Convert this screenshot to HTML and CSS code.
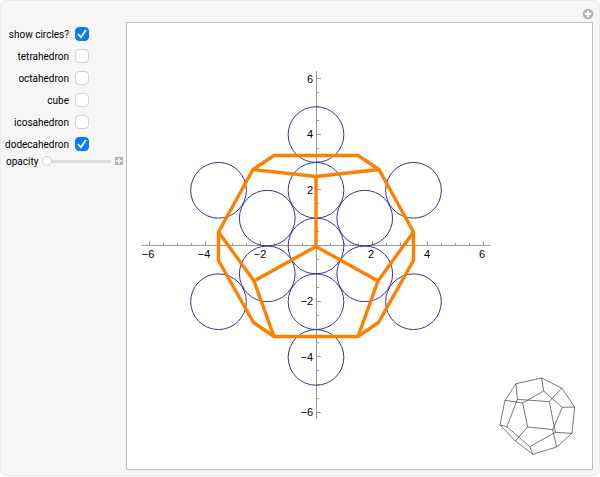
FILE: index.html
```html
<!DOCTYPE html>
<html lang="en">
<head>
    <meta charset="UTF-8">
    <meta name="viewport" content="width=device-width, initial-scale=1.0">
    <title>Polyhedra and circles</title>
    <link rel="stylesheet" href="styles.css">
</head>
<body>
    <main class="panel">
        <header class="panel-header">
            <button class="menu-button" type="button" aria-label="Options">
                <svg width="12" height="12" viewBox="0 0 12 12">
                    <circle cx="6" cy="6" r="5.3" fill="#b4b4b4"/>
                    <path d="M6 2.8v6.4M2.8 6h6.4" stroke="#fff" stroke-width="2.2"/>
                </svg>
            </button>
        </header>
        <div class="panel-body">
            <form class="controls">
                <div class="check-row">
                    <label for="circles">show circles?</label>
                    <input type="checkbox" id="circles" checked>
                </div>
                <div class="check-row">
                    <label for="tetrahedron">tetrahedron</label>
                    <input type="checkbox" id="tetrahedron">
                </div>
                <div class="check-row">
                    <label for="octahedron">octahedron</label>
                    <input type="checkbox" id="octahedron">
                </div>
                <div class="check-row">
                    <label for="cube">cube</label>
                    <input type="checkbox" id="cube">
                </div>
                <div class="check-row">
                    <label for="icosahedron">icosahedron</label>
                    <input type="checkbox" id="icosahedron">
                </div>
                <div class="check-row">
                    <label for="dodecahedron">dodecahedron</label>
                    <input type="checkbox" id="dodecahedron" checked>
                </div>
                <div class="slider-row">
                    <label for="opacity">opacity</label>
                    <input type="range" id="opacity" min="0" max="100" value="0">
                    <button class="expand-button" type="button" aria-label="Show slider controls">
                        <svg width="8" height="8" viewBox="0 0 8 8">
                            <rect width="8" height="8" fill="#b4b4b4"/>
                            <path d="M4 1v6M1 4h6" stroke="#fff" stroke-width="1.4"/>
                        </svg>
                    </button>
                </div>
            </form>
            <div class="output">
                <svg class="plot" viewBox="-189 -222 465 446">
                    <!-- axes, one unit is 27.85 -->
                    <g class="axes">
                        <path d="M-174.5 .5H174.5M.5 -174V174"/>
                        <path id="ticks"/>
                    </g>
                    <g class="tick-labels">
                        <text x="-168" y="13">−6</text>
                        <text x="-112" y="13">−4</text>
                        <text x="-56" y="13">−2</text>
                        <text x="55" y="13">2</text>
                        <text x="111" y="13">4</text>
                        <text x="166" y="13">6</text>
                    </g>
                    <g class="tick-labels vertical">
                        <text x="-3" y="-162">6</text>
                        <text x="-3" y="-107">4</text>
                        <text x="-3" y="-51">2</text>
                        <text x="-3" y="60">−2</text>
                        <text x="-3" y="116">−4</text>
                        <text x="-3" y="171">−6</text>
                    </g>
                    <g class="circles" id="circle-group"></g>
                    <g class="net">
                        <path d="M-97.5 -13V15.5L-62.5 77.5L-42 91.5H42L62.5 77.5L97.5 15.5V-13L63 -75.5L42 -89.5H-42L-63 -75.5Z"/>
                        <path d="M-63 -75.5L0 -68.5L63 -75.5M0 -68.5V1.5"/>
                        <path d="M0 1.5L-62 36L-97.5 -13M-62 36L-42 91.5"/>
                        <path d="M0 1.5L62 36L97.5 -13M62 36L42 91.5"/>
                    </g>
                    <!-- wireframe solid in the corner -->
                    <g class="wireframe" transform="translate(174 125) scale(.33333)">
                        <path d="M78 41L155 24L215 54L254 111L246 190L200 231L129 253L76 213L30 165L45 91Z"/>
                        <path d="M78 41L82 88L178 95L196 187L119 230L51 170L82 88M215 54L178 95M246 190L196 187M129 253L119 230M30 165L51 170"/>
                        <path d="M155 24L161 63L98 99L113 171L188 179L217 112L161 63M45 91L98 99M76 213L113 171M200 231L188 179M254 111L217 112"/>
                    </g>
                </svg>
            </div>
        </div>
    </main>
    <script src="script.js"></script>
</body>
</html>
```
FILE: styles.css
```css
* {
    box-sizing: border-box;
}
body {
    margin: 0;
    background: #ffffff;
    font-family: Roboto, "Liberation Sans", sans-serif;
    font-size: 10px;
    color: #000000;
}
.panel {
    padding: 0 6px 5px 5px;
    background: #f6f6f6;
    border: 1px solid #ececec;
    border-radius: 6px;
}
.panel-header {
    display: flex;
    justify-content: flex-end;
    height: 21px;
    padding-top: 7px;
}
button {
    display: block;
    padding: 0;
    border: none;
    background: none;
    cursor: pointer;
}
button svg {
    display: block;
}
.menu-button {
    width: 12px;
    height: 12px;
    margin-right: -1px;
}
.panel-body {
    display: flex;
    align-items: flex-start;
}
.controls {
    flex: none;
    width: 120px;
    padding-top: 1px;
}
.check-row {
    display: grid;
    grid-template-columns: 63px 14px;
    column-gap: 6px;
    align-items: center;
    justify-items: end;
    height: 22px;
}
label {
    white-space: nowrap;
}
input[type="checkbox"] {
    appearance: none;
    width: 14px;
    height: 14px;
    margin: 0;
    border: 1px solid #d2d2d2;
    border-radius: 4px;
    background: #ffffff;
}
input[type="checkbox"]:checked {
    border-color: #0a7aff;
    background: #0a7aff url("data:image/svg+xml,%3Csvg xmlns='http://www.w3.org/2000/svg' viewBox='0 0 12 12'%3E%3Cpath d='M2.5 6.5L5 9.3L9.5 2.6' fill='none' stroke='white' stroke-width='1.8' stroke-linecap='round' stroke-linejoin='round'/%3E%3C/svg%3E") center / 12px 12px;
}
.slider-row {
    display: flex;
    align-items: center;
    height: 12px;
}
.slider-row input {
    appearance: none;
    flex: 1;
    width: 0;
    height: 12px;
    margin: 0 4px;
    background: linear-gradient(#dcdcdc, #dcdcdc) center / 100% 3px no-repeat;
}
.slider-row input::-webkit-slider-thumb {
    appearance: none;
    width: 10px;
    height: 10px;
    border: 1px solid #d0d0d0;
    border-radius: 50%;
    background: #ffffff;
}
.expand-button {
    width: 8px;
    height: 8px;
    margin-right: 3px;
}
.output {
    flex: 1;
    min-width: 0;
    border: 1px solid #bfbfbf;
    background: #ffffff;
}
.plot {
    display: block;
    width: 100%;
}
.axes path {
    fill: none;
    stroke: #9a9a9a;
    stroke-width: 1;
}
.tick-labels {
    font-family: "Liberation Sans", Arial, sans-serif;
    font-size: 11px;
    text-anchor: middle;
}
.tick-labels.vertical {
    text-anchor: end;
}
.circles circle {
    fill: none;
    stroke: #33339f;
    stroke-width: 1;
}
.net path {
    fill: none;
    stroke: #ff8000;
    stroke-width: 3.4;
    stroke-linejoin: bevel;
}
.wireframe path {
    fill: none;
    stroke: #333333;
    stroke-width: 2;
}
```
FILE: script.js
```js
const unit = 27.85;
const svgNS = 'http://www.w3.org/2000/svg';

// ticks every half unit, long ones on the even numbers
let d = '';
for (let i = -12; i <= 12; i++) {
    if (i === 0) continue;
    const p = Math.round(i * unit / 2) + 0.5;
    const size = i % 4 === 0 ? 4 : 2;
    d += `M${p} 0V${-size}M1 ${p}H${1 + size}`;
}
document.getElementById('ticks').setAttribute('d', d);

const s = 1.75;
const centers = [
    [0, 0], [0, 2], [0, -2], [0, 4], [0, -4],
    [s, 1], [s, -1], [-s, 1], [-s, -1],
    [2 * s, 2], [2 * s, -2], [-2 * s, 2], [-2 * s, -2]
];
const group = document.getElementById('circle-group');
centers.forEach(([x, y]) => {
    const circle = document.createElementNS(svgNS, 'circle');
    circle.setAttribute('cx', x * unit);
    circle.setAttribute('cy', y * unit + 1);
    circle.setAttribute('r', unit);
    group.appendChild(circle);
});
```
